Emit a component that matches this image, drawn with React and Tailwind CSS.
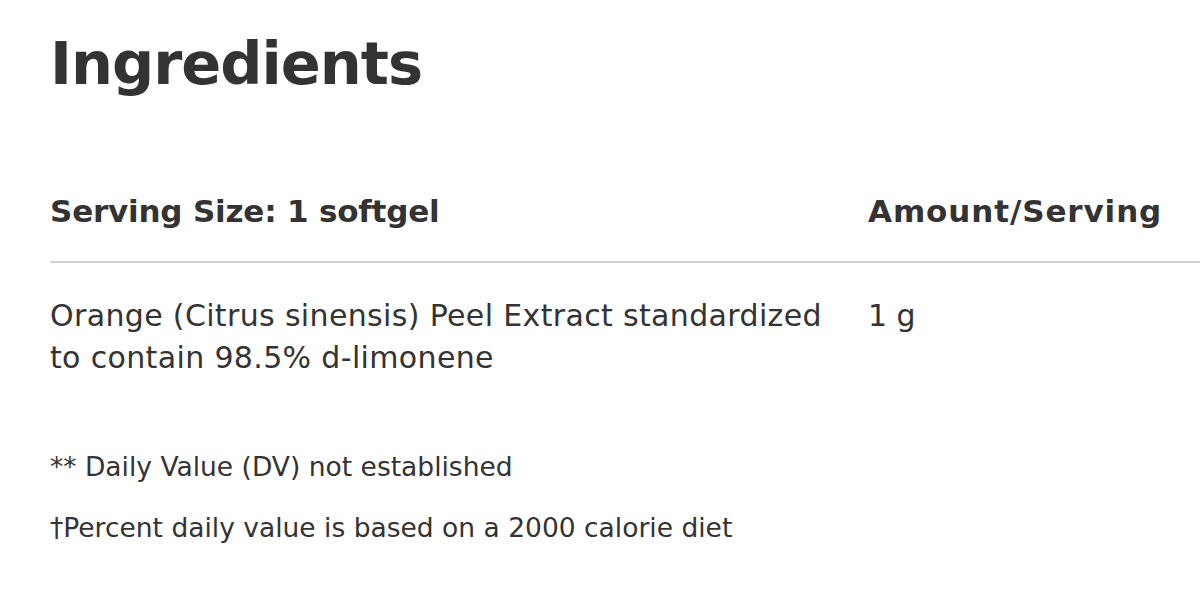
export default function App() {
  return (
    <div
      className="min-h-[593px] bg-white pl-[50px] text-[#333]"
      style={{ fontFamily: '"DejaVu Sans", sans-serif' }}
    >
      <h1 className="pt-[24px] text-[59px] font-bold leading-[80px] tracking-[-1px]">Ingredients</h1>

      <table className="mt-[89px] w-[1200px] border-collapse text-left">
        <thead>
          <tr className="border-b-2 border-[#d6d1cd]">
            <th className="w-[818px] pb-[32px] text-[31px] font-bold leading-[36px] tracking-[-0.2px]">Serving Size: 1 softgel</th>
            <th className="pb-[32px] text-[31px] font-bold leading-[36px] tracking-[0.9px]">Amount/Serving</th>
          </tr>
        </thead>
        <tbody>
          <tr>
            <td className="pt-[32px] align-top text-[30px] font-normal leading-[42px] tracking-[0.35px]">
              Orange (Citrus sinensis) Peel Extract standardized
              <br />
              to contain 98.5% d-limonene
            </td>
            <td className="pt-[32px] align-top text-[30px] leading-[42px]">1 g</td>
          </tr>
        </tbody>
      </table>

      <p className="mt-[68px] text-[26.5px] leading-[40px]">** Daily Value (DV) not established</p>
      <p className="mt-[21px] text-[26.5px] leading-[40px]">†Percent daily value is based on a 2000 calorie diet</p>
    </div>
  );
}
